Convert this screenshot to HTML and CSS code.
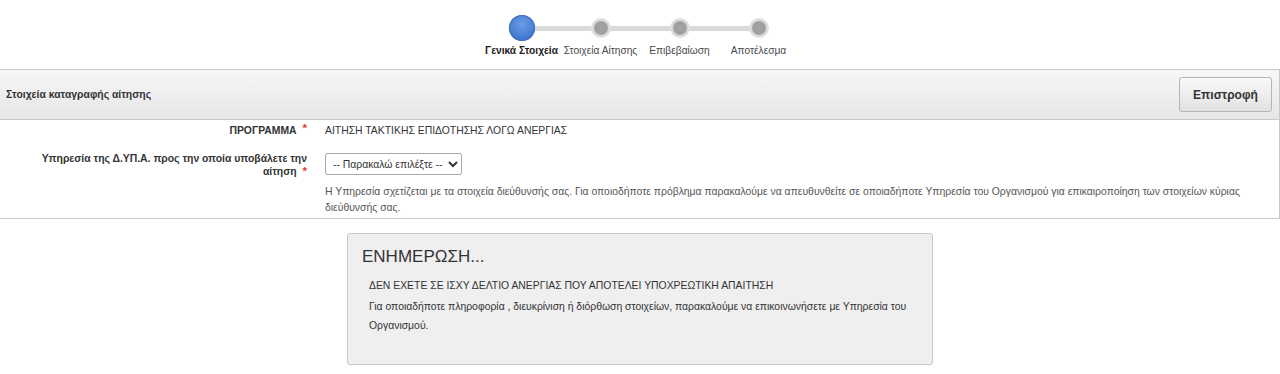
FILE: index.html
```html
<!DOCTYPE html>
<html lang="el">
  <head>
    <meta charset="UTF-8" />
    <title>Αίτηση</title>
    <link rel="stylesheet" href="styles.css">
  </head>
  <body>
    <div class="stepper">
      <div class="step active">
        <span class="dot"></span>
        <span class="step-label">Γενικά Στοιχεία</span>
      </div>
      <div class="step">
        <span class="dot"></span>
        <span class="step-label">Στοιχεία Αίτησης</span>
      </div>
      <div class="step">
        <span class="dot"></span>
        <span class="step-label">Επιβεβαίωση</span>
      </div>
      <div class="step">
        <span class="dot"></span>
        <span class="step-label">Αποτέλεσμα</span>
      </div>
    </div>

    <div class="panel">
      <div class="panel-heading">
        <h3 class="panel-title">Στοιχεία καταγραφής αίτησης</h3>
        <button class="btn-back">Επιστροφή</button>
      </div>
      <div class="panel-body">
        <div class="form-row">
          <label class="form-label">ΠΡΟΓΡΑΜΜΑ <span class="req">*</span></label>
          <div class="form-value">ΑΙΤΗΣΗ ΤΑΚΤΙΚΗΣ ΕΠΙΔΟΤΗΣΗΣ ΛΟΓΩ ΑΝΕΡΓΙΑΣ</div>
        </div>
        <div class="form-row">
          <label class="form-label two-line">Υπηρεσία της Δ.ΥΠ.Α. προς την οποία υποβάλετε την αίτηση <span class="req">*</span></label>
          <div class="form-value">
            <select class="form-select">
              <option>-- Παρακαλώ επιλέξτε --</option>
            </select>
            <p class="help-text">
              Η Υπηρεσία σχετίζεται με τα στοιχεία διεύθυνσής σας. Για οποιοδήποτε πρόβλημα παρακαλούμε να απευθυνθείτε σε οποιαδήποτε Υπηρεσία του Οργανισμού για επικαιροποίηση των στοιχείων κύριας διεύθυνσής σας.
            </p>
          </div>
        </div>
      </div>
    </div>

    <div class="notice">
      <h2 class="notice-title">ΕΝΗΜΕΡΩΣΗ...</h2>
      <div class="notice-body">
        <p class="notice-strong">ΔΕΝ ΕΧΕΤΕ ΣΕ ΙΣΧΥ ΔΕΛΤΙΟ ΑΝΕΡΓΙΑΣ ΠΟΥ ΑΠΟΤΕΛΕΙ ΥΠΟΧΡΕΩΤΙΚΗ ΑΠΑΙΤΗΣΗ</p>
        <p>Για οποιαδήποτε πληροφορία , διευκρίνιση ή διόρθωση στοιχείων, παρακαλούμε να επικοινωνήσετε με Υπηρεσία του Οργανισμού.</p>
      </div>
    </div>
  </body>
</html>
```

FILE: styles.css
```css
* {
  margin: 0;
  padding: 0;
  box-sizing: border-box;
}

body {
  font-family: "Liberation Sans", Arial, sans-serif;
  font-size: 10.4px;
  color: #333;
  background: #ffffff;
}

/* Stepper */
.stepper {
  display: flex;
  justify-content: center;
  padding-top: 15px;
  height: 69px;
}

.step {
  width: 79px;
  display: flex;
  flex-direction: column;
  align-items: center;
  position: relative;
}

.step + .step::before {
  content: "";
  position: absolute;
  top: 11px;
  left: -40px;
  width: 79px;
  height: 5px;
  background: #dadada;
  z-index: 0;
}

.dot {
  position: relative;
  z-index: 1;
  width: 26px;
  height: 26px;
  display: flex;
  align-items: center;
  justify-content: center;
}

.dot::after {
  content: "";
  width: 20px;
  height: 20px;
  border-radius: 50%;
  background: radial-gradient(circle at 50% 50%, #a3a3a3 0, #9e9e9e 5.5px, #aaaaaa 6.5px, #d8d8d8 7.5px, #e4e4e4 10px);
}

.step.active .dot::after {
  width: 26px;
  height: 26px;
  background: radial-gradient(circle at 50% 35%, #6c9de4 0%, #4a80d6 55%, #2f64bd 100%);
  box-shadow: 0 0 0 1px #3d6fbf inset;
}

.step-label {
  margin-top: 3px;
  white-space: nowrap;
  font-size: 10.2px;
  line-height: 13px;
  color: #4a4a4a;
}

.step.active .step-label {
  font-weight: bold;
  color: #222;
}

/* Panel */
.panel {
  border-top: 1px solid #c8c8c8;
  border-right: 1px solid #c8c8c8;
  border-bottom: 1px solid #c8c8c8;
  background: #fff;
}

.panel-heading {
  display: flex;
  align-items: center;
  justify-content: space-between;
  height: 50px;
  padding: 0 7px 0 6px;
  background: linear-gradient(to bottom, #f7f7f7 0%, #e6e6e6 100%);
  border-bottom: 1px solid #c8c8c8;
}

.panel-title {
  font-size: 10.4px;
  font-weight: bold;
  color: #333;
}

.btn-back {
  width: 93px;
  height: 35px;
  font-family: "Liberation Sans", Arial, sans-serif;
  font-size: 12px;
  font-weight: bold;
  color: #333;
  background: linear-gradient(to bottom, #f9f9f9 0%, #e2e2e2 100%);
  border: 1px solid #b5b5b5;
  border-radius: 3px;
  cursor: pointer;
}

.panel-body {
  padding: 3px 0 2px;
}

.form-row {
  display: grid;
  grid-template-columns: 307px 1fr;
  column-gap: 18px;
}

.form-row + .form-row {
  margin-top: 13px;
}

.form-label {
  text-align: right;
  font-weight: bold;
  line-height: 16px;
  color: #333;
}

.form-label.two-line {
  line-height: 12.5px;
  padding-top: 1px;
  padding-left: 20px;
}

.req {
  color: #e23b2e;
  font-size: 11.5px;
  vertical-align: top;
  line-height: 10px;
  margin-left: 3px;
}

.form-value {
  line-height: 16px;
  padding-right: 30px;
}

.form-select {
  width: 137px;
  height: 22px;
  font-family: "Liberation Sans", Arial, sans-serif;
  font-size: 10.4px;
  color: #333;
  border: 1px solid #aaa;
  border-radius: 2px;
  background: #fff;
  padding: 0 0 0 3px;
  margin-top: 1px;
}

.help-text {
  margin-top: 9px;
  color: #555;
  line-height: 16px;
}

/* Notice box */
.notice {
  width: 586px;
  height: 132px;
  margin: 14px auto 0;
  padding: 13px 14px;
  background: #efefef;
  border: 1px solid #c6c6c6;
  border-radius: 3px;
}

.notice-title {
  font-size: 17px;
  font-weight: normal;
  color: #333;
  line-height: 20px;
}

.notice-body {
  padding: 9px 7px 0;
  line-height: 19px;
  color: #333;
}

.notice-strong {
  margin-bottom: 2px;
}
```
